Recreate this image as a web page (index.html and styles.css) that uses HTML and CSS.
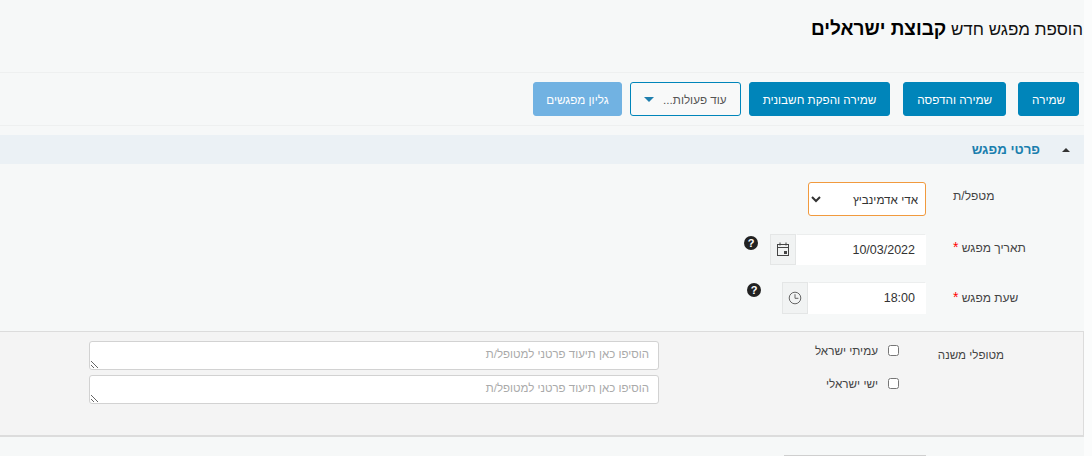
FILE: index.html
```html
<!DOCTYPE html>
<html lang="he" dir="rtl">
<head>
<meta charset="utf-8">
<title>הוספת מפגש חדש</title>
<link rel="stylesheet" href="styles.css">
</head>
<body>
<main class="page">
  <header class="title-bar">
    <h1 class="title">הוספת מפגש חדש <strong>קבוצת ישראלים</strong></h1>
  </header>
  <div class="toolbar">
    <button class="btn btn-save" type="button">שמירה</button>
    <button class="btn btn-print" type="button">שמירה והדפסה</button>
    <button class="btn btn-invoice" type="button">שמירה והפקת חשבונית</button>
    <button class="btn btn-outline" type="button">עוד פעולות...<span class="caret"></span></button>
    <button class="btn btn-light" type="button">גליון מפגשים</button>
  </div>
  <section class="section">
    <div class="section-head">
      <span class="section-caret"></span>
      <span class="section-title">פרטי מפגש</span>
    </div>
    <div class="row row-therapist">
      <label class="label">מטפל/ת</label>
      <select class="select"><option>אדי אדמינביץ</option></select>
    </div>
    <div class="row row-date">
      <label class="label">תאריך מפגש <span class="req">*</span></label>
      <div class="group group-date">
        <input class="input" type="text" value="10/03/2022" dir="rtl">
        <span class="addon">
          <svg width="14" height="15" viewBox="0 0 14 15" fill="none" stroke="#444" stroke-width="1"><rect x="1.5" y="2.5" width="11" height="11"/><path d="M1.5 5.5h11M4 .5v3M10 .5v3"/><rect x="8" y="9" width="3" height="3" fill="#444" stroke="none"/></svg>
        </span>
      </div>
      <span class="help help-date">?</span>
    </div>
    <div class="row row-time">
      <label class="label">שעת מפגש <span class="req">*</span></label>
      <div class="group group-time">
        <input class="input" type="text" value="18:00" dir="rtl">
        <span class="addon">
          <svg width="14" height="14" viewBox="0 0 14 14" fill="none" stroke="#666" stroke-width="1"><circle cx="7" cy="7" r="5.8"/><path d="M7 3.2V7.3H10.4"/></svg>
        </span>
      </div>
      <span class="help help-time">?</span>
    </div>
    <div class="panel">
      <div class="panel-label">מטופלי משנה</div>
      <div class="checks">
        <label class="check"><input type="checkbox">עמיתי ישראל</label>
        <label class="check"><input type="checkbox">ישי ישראלי</label>
      </div>
      <div class="notes">
        <textarea class="note" placeholder="הוסיפו כאן תיעוד פרטני למטופל/ת"></textarea>
        <textarea class="note" placeholder="הוסיפו כאן תיעוד פרטני למטופל/ת"></textarea>
      </div>
    </div>
    <div class="next-row"><div class="next-field"></div></div>
  </section>
</main>
</body>
</html>
```
FILE: styles.css
```css
* { box-sizing: border-box; }
html, body { margin: 0; height: 456px; overflow: hidden; }
body {
  background: #fbfcfc;
  font-family: "Liberation Sans", Arial, sans-serif;
  font-size: 12px;
  color: #333;
}
.page { width: 1084px; height: 456px; margin-right: 8px; background: #f6f8f8; }

.title-bar { height: 73px; padding-top: 19px; padding-right: 1px; border-bottom: 1px solid #eef0f0; }
.title { margin: 0; font-size: 17px; font-weight: 400; line-height: 20px; color: #111; }
.title strong { font-size: 19px; font-weight: 700; color: #000; }

.toolbar {
  height: 53px;
  padding: 9px 5px 0 0;
  display: flex;
  align-items: flex-start;
  border-bottom: 1px solid #eef0f0;
}
.btn {
  height: 34px;
  padding: 0 13px;
  border: 1px solid #0085ba;
  border-radius: 3px;
  background: #0085ba;
  color: #fff;
  font: 11.7px "Liberation Sans", Arial, sans-serif;
  white-space: nowrap;
}
.btn-save { margin-left: 12px; }
.btn-print { margin-left: 13px; }
.btn-invoice { margin-left: 8px; }
.btn-outline {
  margin-left: 8px;
  background: #f8f9f9;
  color: #555;
  display: flex;
  align-items: center;
}
.caret {
  margin-right: 9px;
  border-top: 5px solid #1f7fae;
  border-left: 5px solid transparent;
  border-right: 5px solid transparent;
}
.btn-light { padding: 0 12.5px; background: #71b2e2; border-color: #71b2e2; }

.section { padding-top: 9px; }
.section-head {
  height: 29px;
  background: #ebf1f5;
  display: flex;
  align-items: center;
  padding-right: 14px;
}
.section-caret {
  border-bottom: 4px solid #333;
  border-left: 4.5px solid transparent;
  border-right: 4.5px solid transparent;
}
.section-title { margin-right: 22px; font-weight: 700; font-size: 13.3px; color: #1b7fae; }

.row { display: flex; align-items: flex-start; }
.label { width: 131px; margin-left: 27px; text-align: left; font-size: 12px; color: #444; }
.req { color: #f00; font-size: 14px; }

.row-therapist { margin-top: 18px; height: 52px; }
.row-therapist .label { padding-top: 7px; }
.select {
  width: 118px;
  height: 34px;
  border: 1px solid #f19a3e;
  border-radius: 3px;
  background: #fff;
  padding: 0 3px;
  font: 11.7px "Liberation Sans", Arial, sans-serif;
  color: #333;
}

.row-date { height: 48px; }
.row-date .label { padding-top: 5px; }
.row-time { height: 49px; }
.row-time .label { padding-top: 7px; }
.group { display: flex; height: 31px; }
.group-date { width: 156px; }
.group-time { width: 144px; height: 32px; }
.input {
  flex: 1;
  min-width: 0;
  height: 100%;
  padding: 0 10px;
  border: 1px solid #fff;
  border-top-color: #eceeee;
  background: #fff;
  font: 12.5px "Liberation Sans", Arial, sans-serif;
  color: #333;
}
.addon {
  width: 26px;
  flex: none;
  display: flex;
  align-items: center;
  justify-content: center;
  background: #f1f3f3;
  border: 1px solid #e4e6e6;
}
.help {
  width: 14px;
  height: 14px;
  margin-right: 12px;
  border-radius: 50%;
  background: #222;
  color: #fff;
  font-size: 11px;
  font-weight: 700;
  line-height: 14px;
  text-align: center;
}
.help-date { margin-top: 2px; }
.help-time { margin-top: 1px; margin-right: 21px; }

.panel {
  height: 106px;
  background: #f4f4f4;
  border-top: 1px solid #dcdcdc;
  border-right: 1px solid #dcdcdc;
  border-bottom: 2px solid #dcdcdc;
  display: flex;
  align-items: flex-start;
}
.panel-label { width: 65px; margin-right: 79px; margin-top: 16px; font-size: 11.6px; color: #444; white-space: nowrap; }
.checks { margin-right: 40px; width: 130px; padding-top: 11px; display: flex; flex-direction: column; gap: 18px; }
.check { display: flex; align-items: center; height: 15px; color: #444; font-size: 11.7px; }
.check input {
  width: 11px;
  height: 11px;
  margin: 0 0 0 10px;
}
.notes { margin-right: 110px; margin-top: 9px; display: flex; flex-direction: column; gap: 5px; }
.note {
  display: block;
  width: 570px;
  height: 29px;
  margin: 0;
  padding: 6px 9px;
  border: 1px solid #d2d2d2;
  border-radius: 3px;
  background: #fff;
  font: 11.5px "Liberation Sans", Arial, sans-serif;
  resize: both;
}
.note::placeholder { color: #aaa; }

.next-row { padding: 18px 158px 0 0; }
.next-field { width: 142px; height: 10px; border-top: 1px solid #cfcfcf; background: #fff; }
```
